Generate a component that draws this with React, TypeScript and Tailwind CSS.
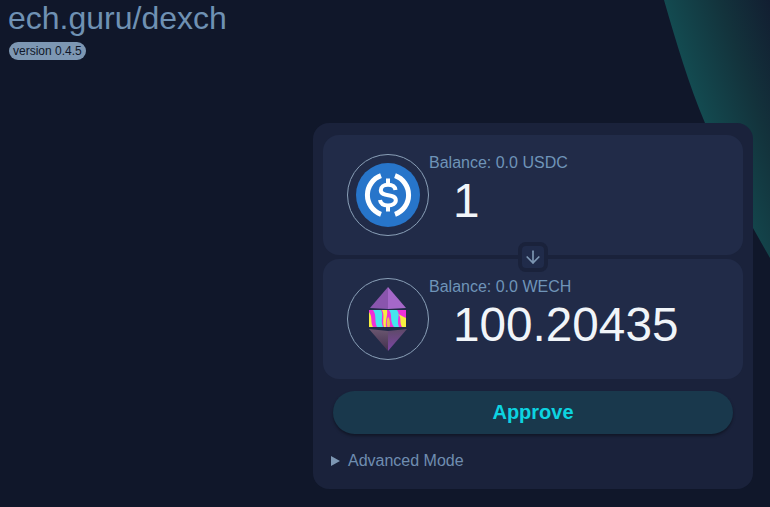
import { ArrowDown } from "lucide-react";

const sans = { fontFamily: '"Liberation Sans", Arial, sans-serif' };

function UsdcLogo() {
  return (
    <svg viewBox="0 0 64 64" className="w-16 h-16">
      <circle cx="32" cy="32" r="32" fill="#2775ca" />
      <path d="M25 12.7 A20.5 20.5 0 0 0 25 51.3" fill="none" stroke="#fff" strokeWidth="5" />
      <path d="M39 12.7 A20.5 20.5 0 0 1 39 51.3" fill="none" stroke="#fff" strokeWidth="5" />
      <path d="M39.5 27 C39 23.5 36 21.8 32 21.8 C27.5 21.8 24.8 24 24.8 27.2 C24.8 35 39.8 29.5 39.8 37.3 C39.8 40.5 36.5 42.4 32 42.4 C27.5 42.4 24.5 40.5 24 37" fill="none" stroke="#fff" strokeWidth="4" />
      <path d="M32 15.5 V21.5 M32 42.5 V48.5" stroke="#fff" strokeWidth="4" />
    </svg>
  );
}

function WechLogo() {
  return (
    <svg viewBox="0 0 38 64" className="w-[38px] h-16">
      <defs>
        <linearGradient id="bottomLeft" x1="0" y1="0" x2="0" y2="1">
          <stop offset="0" stopColor="#6a5670" />
          <stop offset="1" stopColor="#43304e" />
        </linearGradient>
        <linearGradient id="bottomRight" x1="0" y1="0" x2="0" y2="1">
          <stop offset="0" stopColor="#5e4a68" />
          <stop offset="1" stopColor="#7d45a4" />
        </linearGradient>
      </defs>
      <polygon points="19,0 1,21 19,22" fill="#8a55ad" />
      <polygon points="19,0 37,21 19,22" fill="#a568c9" />
      <rect x="0" y="23" width="37" height="17" fill="#ee30d8" />
      <path d="M4 23 C8 28 5 34 8 40 H14 C11 33 15 28 12 23 Z" fill="#45e6ee" />
      <path d="M20 23 C24 28 20 33 25 40 H30 C27 33 32 28 28 23 Z" fill="#45e6ee" />
      <path d="M0 25 C4 30 1 35 4 40 H0 Z" fill="#f6ee40" />
      <path d="M13 23 C16 28 13 34 15 40 H17 C16 33 19 28 18 23 Z" fill="#f6ee40" />
      <path d="M29 27 C33 30 30 35 33 40 H37 V31 C34 30 32 28 29 27 Z" fill="#f6ee40" />
      <path d="M18.5 40 C17 35 18 31 19.5 30 C21 33 21.5 36 20.5 40 Z" fill="#e8c050" />
      <polygon points="0,42 19,44 19,64" fill="url(#bottomLeft)" />
      <polygon points="38,42 19,44 19,64" fill="url(#bottomRight)" />
    </svg>
  );
}

function TokenBox({ balance, amount, logo }: { balance: string; amount: string; logo: React.ReactNode }) {
  return (
    <div className="h-[120px] rounded-2xl bg-[#212b48] flex pl-6 pr-4 py-[19px]">
      <div className="w-[82px] h-[82px] shrink-0 rounded-full border border-[#8aa0b8] flex items-center justify-center">
        {logo}
      </div>
      <div>
        <div className="text-base leading-[18px] text-[#6f94b8]">{balance}</div>
        <div className="ml-6 mt-[1px] text-[47.7px] leading-[56px] text-[#f1f5f9]">{amount}</div>
      </div>
    </div>
  );
}

export default function App() {
  return (
    <div className="relative w-[770px] h-[507px] overflow-hidden bg-[#10172a]" style={sans}>
      {/* corner glow */}
      <svg className="absolute top-0 left-[664px]" width="106" height="260" viewBox="0 0 106 260">
        <defs>
          <linearGradient id="glow" gradientUnits="userSpaceOnUse" x1="0" y1="0" x2="100" y2="-33">
            <stop offset="0" stopColor="#134a50" />
            <stop offset="0.5" stopColor="#13333c" />
            <stop offset="1" stopColor="#121c30" />
          </linearGradient>
        </defs>
        <path d="M0 0 C12 42 25 85 41 123 C55 160 72 198 89 228 L106 258 V0 Z" fill="url(#glow)" />
      </svg>

      <div className="relative px-2">
        <h1 className="text-[32px] leading-[36px] text-[#6f91b3]">ech.guru/dexch</h1>
        <span className="inline-block mt-[6px] ml-px rounded-full bg-[#7d97b3] px-1 text-xs leading-[18px] text-[#10172a]">
          version 0.4.5
        </span>
      </div>

      <div className="absolute left-[313px] top-[123px] w-[440px] h-[366px] rounded-2xl bg-[#1a223b] px-[10px] pt-3">
        <div className="relative flex flex-col gap-1">
          <TokenBox balance="Balance: 0.0 USDC" amount="1" logo={<UsdcLogo />} />
          <TokenBox balance="Balance: 0.0 WECH" amount="100.20435" logo={<WechLogo />} />
          <div className="absolute left-[195px] top-[107px] w-[30px] h-[30px] rounded-lg border-4 border-[#1a223b] bg-[#202b4a] flex items-center justify-center">
            <ArrowDown size={20} className="text-[#7d97b3] shrink-0" strokeWidth={2} />
          </div>
        </div>
        <button className="mt-3 mx-[10px] w-[400px] h-[43px] pb-[2px] rounded-full bg-[#19384c] shadow-[0_2px_3px_rgba(0,0,0,0.35)] text-xl font-bold text-[#0dd3e0]">
          Approve
        </button>
        <div className="mt-[18px] ml-2 flex items-center text-base leading-[18px] text-[#6f8db0]">
          <span className="w-0 h-0 border-y-[5px] border-y-transparent border-l-[9px] border-l-[#7d97b3] mr-2" />
          Advanced Mode
        </div>
      </div>
    </div>
  );
}
